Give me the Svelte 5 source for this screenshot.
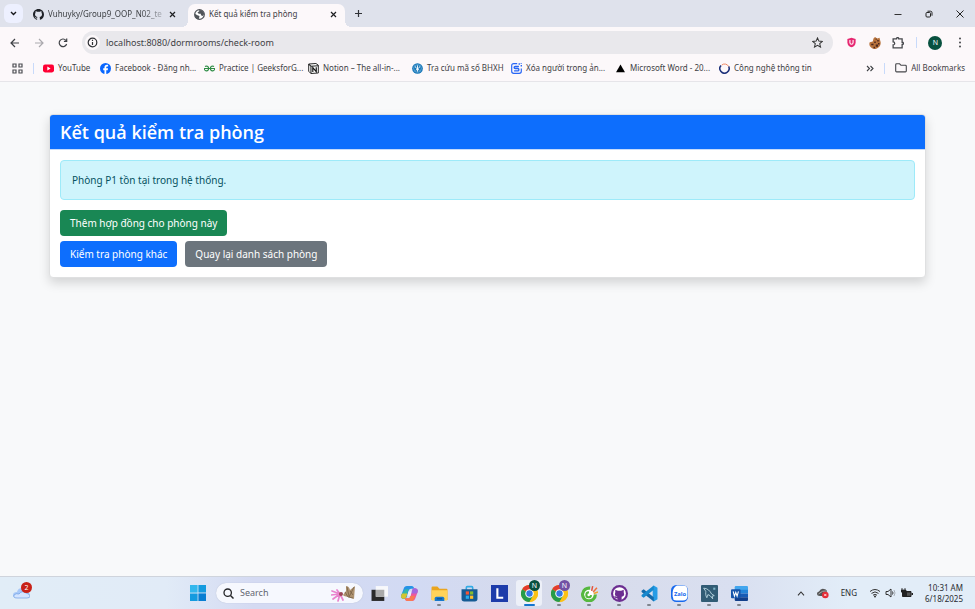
<script>
  const bookmarks = [
    { icon: 'youtube', label: 'YouTube', size: 'small' },
    { icon: 'facebook', label: 'Facebook - Đăng nh...', size: '' },
    { icon: 'geeks', label: 'Practice | GeeksforG...', size: '' },
    { icon: 'notion', label: 'Notion – The all-in-...', size: '' },
    { icon: 'bhxh', label: 'Tra cứu mã số BHXH', size: 'medium' },
    { icon: 'eraser', label: 'Xóa người trong ản...', size: '' },
    { icon: 'vercel', label: 'Microsoft Word - 20...', size: '' },
    { icon: 'ring', label: 'Công nghệ thông tin', size: '' }
  ];

  const apps = [
    { icon: 'taskview', label: 'Task view' },
    { icon: 'copilot', label: 'Copilot' },
    { icon: 'folder', label: 'File Explorer', open: true },
    { icon: 'store', label: 'Microsoft Store' },
    { icon: 'letter', label: 'L' },
    { icon: 'chrome', label: 'Chrome', active: true, badge: 'green' },
    { icon: 'chrome', label: 'Chrome, second profile', open: true, badge: 'purple' },
    { icon: 'coccoc', label: 'Cốc Cốc', open: true },
    { icon: 'github', label: 'GitHub Desktop', open: true },
    { icon: 'vscode', label: 'Visual Studio Code', open: true },
    { icon: 'zalo', label: 'Zalo', open: true },
    { icon: 'mysql', label: 'MySQL Workbench', open: true },
    { icon: 'word', label: 'Word', open: true }
  ];

  let address = $state('localhost:8080/dormrooms/check-room');
</script>

{#snippet octocat(color)}
  <path fill={color} d="M8 0C3.58 0 0 3.58 0 8c0 3.54 2.29 6.53 5.47 7.59.4.07.55-.17.55-.38 0-.19-.01-.82-.01-1.49-2.01.37-2.53-.49-2.69-.94-.09-.23-.48-.94-.82-1.13-.28-.15-.68-.52-.01-.53.63-.01 1.08.58 1.23.82.72 1.21 1.87.87 2.33.66.07-.52.28-.87.51-1.07-1.78-.2-3.64-.89-3.64-3.95 0-.87.31-1.59.82-2.15-.08-.2-.36-1.02.08-2.12 0 0 .67-.21 2.2.82a7.6 7.6 0 0 1 4 0c1.53-1.04 2.2-.82 2.2-.82.44 1.1.16 1.92.08 2.12.51.56.82 1.27.82 2.15 0 3.07-1.87 3.75-3.65 3.95.29.25.54.73.54 1.48 0 1.07-.01 1.93-.01 2.2 0 .21.15.46.55.38A8 8 0 0 0 16 8c0-4.42-3.58-8-8-8z" />
{/snippet}

{#snippet cross()}
  <svg width="7" height="7" viewBox="0 0 7 7"><path d="M1 1l5 5M6 1L1 6" stroke="#1f2023" stroke-width="1.2" fill="none" /></svg>
{/snippet}

{#snippet bookmarkIcon(name)}
  <svg width="11" height="11" viewBox="0 0 16 16" aria-hidden="true">
    {#if name === 'youtube'}
      <rect x="0" y="2.3" width="16" height="11.4" rx="3" fill="#f03" />
      <path d="M6.3 5.2v5.6L11 8z" fill="#fff" />
    {:else if name === 'facebook'}
      <circle cx="8" cy="8" r="8" fill="#0866ff" />
      <path d="M6.5 16V10.400H4.700V7.700h1.800V6.500c0-2.700 1.200-3.900 3.700-3.900.5 0 1.200.1 1.600.2V5.200c-.2 0-.6-.1-1-.1-1.300 0-1.700.5-1.700 1.700v.9h2.600l-.5 2.700H9.100V16z" fill="#fff" />
    {:else if name === 'geeks'}
      <g fill="none" stroke="#2f8d46" stroke-width="1.700">
        <path d="M1.500 5.200C3.500 3.600 6.800 4.900 6.800 8S3.500 12.400 1.300 10.300C.5 9.500.4 8.600.4 8h15.200c0 .6-.1 1.500-.9 2.300-2.200 2.100-5.500.8-5.500-2.300s3.300-4.400 5.300-2.800" />
      </g>
    {:else if name === 'notion'}
      <path d="M1 1.500L11.500.7 15 3.200v11.300l-10.700.8L1 12z" fill="#fff" stroke="#222" stroke-width="1.400" />
      <path d="M1 1.500l3.300 3.100L15 3.900M4.300 4.600v10.600" fill="none" stroke="#222" stroke-width="1.500" />
      <path d="M7 13V6.700l5 6V6" fill="none" stroke="#111" stroke-width="1.700" />
    {:else if name === 'bhxh'}
      <circle cx="8" cy="8" r="7.800" fill="#1675b6" />
      <circle cx="8" cy="8" r="5.600" fill="none" stroke="#8fc8ea" stroke-width=".8" />
      <path d="M8 3.500v9M5 5c0 4 6 4 6 0M5.500 10.500L8 8.500l2.500 2" stroke="#fff" stroke-width="1.300" fill="none" />
    {:else if name === 'eraser'}
      <path d="M9 1H4C2 1 1 2 1 4v8c0 2 1 3 3 3h8c2 0 3-1 3-3V8" fill="none" stroke="#2866f5" stroke-width="1.700" />
      <path d="M11.500 5H6.200C4 5 4 8 6.200 8h3.600c2.200 0 2.200 3.500 0 3.500H4.500" fill="none" stroke="#2866f5" stroke-width="2" />
      <path d="M11 .5h2v2h-2zM14 3h2v2h-2zM14 0h1.500v1.500H14z" fill="#2866f5" />
    {:else if name === 'vercel'}
      <path d="M8 2l6.500 11.500h-13z" fill="#000" />
    {:else}
      <path d="M3 3.500A6.700 6.700 0 1 0 14 5" fill="none" stroke="#1b2f79" stroke-width="2.200" />
      <path d="M4 3A6.500 6.500 0 0 1 14 5" fill="none" stroke="#ee7950" stroke-width="1.300" />
    {/if}
  </svg>
{/snippet}

{#snippet appIcon(name)}
  <svg width="17" height="17" viewBox="0 0 32 32" aria-hidden="true">
    {#if name === 'taskview'}
      <rect x="1" y="9" width="24" height="21" fill="#292929" />
      <rect x="9" y="2" width="23" height="20" fill="#f7f8fb" />
      <rect x="9" y="9" width="16" height="13" fill="#aaa" />
    {:else if name === 'copilot'}
      <path d="M11 2h9c3 0 4 2 5 5h-6c-3 0-4 2-5 5l-3 10c-1 3-3 4-5 4-4 0-7-3-5-8l4-11c1-3 3-5 6-5z" fill="#2693e6" />
      <path d="M8 8h7c-2 1-2 4-3 7l-2 7c-1 3-3 4-5 4-4 0-6-3-4-8z" fill="#35b8a6" />
      <path d="M2 16h10l-2 6c-1 3-3 4-5 4-4 0-6-3-4-8z" fill="#d6c32f" />
      <path d="M21 30h-9c-3 0-4-2-5-5h6c3 0 4-2 5-5l3-10c1-3 3-4 5-4 4 0 7 3 5 8l-4 11c-1 3-3 5-6 5z" fill="#ed579f" />
      <path d="M21 30h-9c-3 0-4-2-5-5h6c3 0 4-2 5-5h9l-2 5c-1 3-2 5-4 5z" fill="#fa7952" />
      <path d="M21 10c1-3 3-4 5-4 4 0 7 3 5 8l-1 2H19z" fill="#a267df" />
      <path d="M14 12h6l-2 8h-6z" fill="#e7effc" />
    {:else if name === 'folder'}
      <path d="M1 5q0-2 2-2h9l4 4h13q2 0 2 2v19H1z" fill="#eaa51f" />
      <path d="M1 10h30v17q0 2-2 2H3q-2 0-2-2z" fill="#ffd35a" />
      <path d="M7 30v-5q0-3 3-3h12q3 0 3 3v5z" fill="#1679ce" />
      <path d="M11 26h10" stroke="#0b4d90" stroke-width="2" />
    {:else if name === 'store'}
      <path d="M10 9V5q0-2 2-2h8q2 0 2 2v4" fill="none" stroke="#32abe5" stroke-width="3" />
      <path d="M1 8h30v18q0 5-5 5H6q-5 0-5-5z" fill="#155b94" />
      <path d="M9 12h6v6H9z" fill="#f45435" /><path d="M17 12h6v6h-6z" fill="#86bc2c" />
      <path d="M9 20h6v6H9z" fill="#24adef" /><path d="M17 20h6v6h-6z" fill="#ffc027" />
    {:else if name === 'letter'}
      <rect width="32" height="32" fill="#1d3caa" />
      <path d="M12 6v18h11" fill="none" stroke="#fff" stroke-width="4" />
    {:else if name === 'chrome'}
      <circle cx="16" cy="16" r="16" fill="#fbc116" />
      <path d="M16 16L2.100 8A16 16 0 0 1 29.900 8z" fill="#e33b2e" />
      <path d="M2.100 8A16 16 0 0 0 16 32l7-12-7-4z" fill="#269b4b" />
      <path d="M16 8h13.900A16 16 0 0 1 16 32l7-12z" fill="#fbc116" />
      <circle cx="16" cy="16" r="8" fill="#fff" /><circle cx="16" cy="16" r="6" fill="#3478e5" />
    {:else if name === 'coccoc'}
      <path d="M17 6.500A11.500 11.500 0 1 0 26.500 18" fill="none" stroke="#55b83f" stroke-width="7" />
      <circle cx="15" cy="18" r="9" fill="#fff" />
      <path d="M15 14a4.500 4.500 0 1 0 4 5" fill="none" stroke="#55b83f" stroke-width="4" />
      <path d="M20 11l2-9" stroke="#e5533d" stroke-width="2.800" />
      <path d="M23 13l7-8" stroke="#ef6d37" stroke-width="2.800" /><path d="M24 16l8-3" stroke="#f4a12b" stroke-width="2.800" />
    {:else if name === 'github'}
      <circle cx="16" cy="16" r="16" fill="#6c2e91" />
      <circle cx="16" cy="16" r="12" fill="#fff" />
      <path d="M12 28v-3c-5 1-4-3-6-4 3-1 4 3 6 1-4-1-6-4-4-8l0-5 5 2h6l5-2v5c2 5 0 7-4 8v6z" fill="#6c2e91" />
    {:else if name === 'vscode'}
      <path d="M24 1l7 4v22l-7 4-2-2V3z" fill="#279ce5" />
      <path d="M1 11l4-3 19 15v8L1 13z" fill="#146aaa" />
      <path d="M1 21l4 3L24 9V1L1 19z" fill="#1688ce" />
    {:else if name === 'zalo'}
      <rect width="32" height="32" rx="10" fill="#1769ee" />
      <path d="M11 1h12q8 0 8 9v11q0 8-9 8H10l-5-1c-3-8-4-22 6-27z" fill="#fff" />
      <text x="17" y="20" text-anchor="middle" font-family="Open Sans, sans-serif" font-size="11" font-weight="700" fill="#1769ee">Zalo</text>
    {:else if name === 'mysql'}
      <rect width="32" height="32" rx="2" fill="#315c75" />
      <path d="M5 6c7 0 12 5 15 11l5 3-4 1 1 5-5-6-4-2-2 6c-3-5-2-9-2-12z" fill="none" stroke="#bfdce5" stroke-width="1.600" />
      <path d="M23 5h4v4h-4z" fill="#7fb5c8" />
    {:else}
      <path d="M9 2h21q2 0 2 2v6H7V4q0-2 2-2z" fill="#42a6ee" />
      <path d="M7 9h25v7H7z" fill="#2484d8" /><path d="M7 16h25v7H7z" fill="#175bb5" />
      <path d="M7 23h25v5q0 2-2 2H9q-2 0-2-2z" fill="#123f8b" />
      <rect y="8" width="18" height="17" rx="2" fill="#1655ab" />
      <path d="M4 12l2.500 9L9 14l2.500 7L14 12" fill="none" stroke="#fff" stroke-width="2" />
    {/if}
  </svg>
{/snippet}

<div class="screen">
  <header>
    <div class="tabs">
      <button class="tab-search" aria-label="Search tabs"><svg width="7" height="5" viewBox="0 0 7 5"><path d="M1 1l2.500 2.500L6 1" fill="none" stroke="#18191d" stroke-width="1.400" /></svg></button>
      <div class="tab">
        <svg width="11" height="11" viewBox="0 0 16 16">{@render octocat('#1d2026')}</svg>
        <span class="tab-title faded">Vuhuyky/Group9_OOP_N02_te</span>
        <button aria-label="Close tab">{@render cross()}</button>
      </div>
      <div class="tab active">
        <svg width="11" height="11" viewBox="0 0 16 16"><circle cx="8" cy="8" r="7" fill="#fff" stroke="#505459" stroke-width="1.800" /><path d="M1 7l4 2 3 1-1 5C3 15 1 12 1 8zM7 1l5 1 3 5-2 3-3-1V7H7L5 5l3-2z" fill="#505459" /></svg>
        <span class="tab-title">Kết quả kiểm tra phòng</span>
        <button aria-label="Close tab">{@render cross()}</button>
      </div>
      <button class="new-tab" aria-label="New tab"><svg width="9" height="9" viewBox="0 0 9 9"><path d="M4.500 1v7M1 4.500h7" stroke="#303237" stroke-width="1.200" /></svg></button>
      <div class="window-controls">
        <button aria-label="Minimize"><svg width="8" height="8" viewBox="0 0 8 8"><path d="M.5 4.500h7" stroke="#333" /></svg></button>
        <button aria-label="Restore"><svg width="8" height="8" viewBox="0 0 8 8"><path d="M2.500 1.200h3q1.500 0 1.500 1.500v3M1 3.500q0-1 1-1h2.500q1 0 1 1V6q0 1-1 1H2Q1 7 1 6z" fill="none" stroke="#222" /></svg></button>
        <button aria-label="Close"><svg width="8" height="8" viewBox="0 0 8 8"><path d="M.5.500l7 7m0-7l-7 7" stroke="#222" /></svg></button>
      </div>
    </div>

    <div class="toolbar">
      <button aria-label="Back"><svg width="10" height="10" viewBox="0 0 10 10"><path d="M9 5H1.500M5 1L1 5l4 4" fill="none" stroke="#3e4145" stroke-width="1.200" /></svg></button>
      <button aria-label="Forward"><svg width="10" height="10" viewBox="0 0 10 10"><path d="M1 5h7.500M5 1l4 4-4 4" fill="none" stroke="#aaa9ad" stroke-width="1.200" /></svg></button>
      <button aria-label="Reload"><svg width="10" height="10" viewBox="0 0 10 10"><path d="M8.600 6A3.800 3.800 0 1 1 8 2.500M8.700.600v2.800H5.900" fill="none" stroke="#3e4145" stroke-width="1.200" /></svg></button>
      <div class="address">
        <button class="info" aria-label="Site information"><svg width="11" height="11" viewBox="0 0 11 11"><circle cx="5.500" cy="5.500" r="4.300" fill="none" stroke="#303236" stroke-width="1.200" /><path d="M5.500 5v3M5.500 2.800v1.200" stroke="#303236" stroke-width="1.200" /></svg></button>
        <input aria-label="Address" bind:value={address} />
        <button class="star" aria-label="Bookmark this page"><svg width="11" height="11" viewBox="0 0 24 24"><path d="M12 2l3 7 7.500.600-5.700 5 1.800 7.400L12 18l-6.600 4 1.800-7.400-5.700-5L9 9z" fill="none" stroke="#333" stroke-width="2.200" /></svg></button>
      </div>
      <div class="extensions">
        <button aria-label="Shield"><svg width="11" height="11" viewBox="0 0 16 16"><path d="M8 1l6 2v5c0 4-3 6-6 7-3-1-6-3-6-7V3z" fill="#e62871" /><path d="M5.700 4.500v3.500c0 3.500 4.600 3.500 4.600 0V4.500" fill="none" stroke="#fff" stroke-width="1.600" /></svg></button>
        <button aria-label="Cookies"><svg width="12" height="12" viewBox="0 0 16 16"><path d="M8 0l3 2 3-1 1 4c2 5-1 10-6 11C3 16-1 11 1 7l4-1 1-4z" fill="#b8733c" /><path d="M7 6h2v2H7zM11 4h2v2h-2zM3 9h3v2H3zM9 10h3v3H9zM6 13h2v2H6zM12 8h2v2h-2zM9 2h1v2H9z" fill="#4a271e" /></svg></button>
        <button aria-label="Extensions"><svg width="12" height="12" viewBox="0 0 16 16"><path d="M1.500 2.500h4.500c0-2.300 3-2.300 3 0h4.500v4.500c2.300 0 2.300 3 0 3v4.500h-12v-4c2.800 0 2.800-4 0-4z" fill="none" stroke="#45474b" stroke-width="1.700" /></svg></button>
        <i class="divider"></i>
        <button class="avatar">N</button>
        <button aria-label="Browser menu"><svg width="4" height="11" viewBox="0 0 4 11"><g fill="#45474b"><circle cx="2" cy="1.500" r="1" /><circle cx="2" cy="5.500" r="1" /><circle cx="2" cy="9.500" r="1" /></g></svg></button>
      </div>
    </div>

    <nav class="bookmarks" aria-label="Bookmarks">
      <button aria-label="Apps"><svg width="11" height="11" viewBox="0 0 11 11"><path d="M1 1h3v3H1zM7 1h3v3H7zM1 7h3v3H1zM7 7h3v3H7z" fill="none" stroke="#4c4e53" stroke-width="1.200" /></svg></button>
      <i class="divider"></i>
      <div class="links">
        {#each bookmarks as item}
          <a href="#{item.icon}" class={item.size}>{@render bookmarkIcon(item.icon)}<span>{item.label}</span></a>
        {/each}
      </div>
      <button class="overflow" aria-label="More bookmarks"><svg width="8" height="7" viewBox="0 0 8 7"><path d="M1 1l2.500 2.500L1 6M4.500 1L7 3.500 4.500 6" fill="none" stroke="#3e4145" stroke-width="1.100" /></svg></button>
      <i class="divider"></i>
      <a class="all" href="#all"><svg width="12" height="10" viewBox="0 0 12 10"><path d="M.700 8V1.700q0-.9.9-.9h3L6 2.300h4.400q.9 0 .9.900V8q0 .9-.9.900H1.600Q.700 8.900.700 8z" fill="none" stroke="#45474b" stroke-width="1.100" /></svg><span>All Bookmarks</span></a>
    </nav>
  </header>

  <main>
    <section class="card">
      <h1>Kết quả kiểm tra phòng</h1>
      <div class="card-body">
        <div class="alert" role="status">Phòng P1 tồn tại trong hệ thống.</div>
        <div class="actions"><button class="btn success">Thêm hợp đồng cho phòng này</button></div>
        <div class="actions">
          <button class="btn primary">Kiểm tra phòng khác</button>
          <button class="btn secondary">Quay lại danh sách phòng</button>
        </div>
      </div>
    </section>
  </main>

  <footer>
    <div class="weather">
      <button aria-label="Weather, 2 notifications">
        <svg width="17" height="12" viewBox="0 0 17 12"><path d="M4 11Q0 11 0 8t4-3Q5 1 9 1t5 4q3 1 3 3t-3 3z" fill="#a8c8f7" /><path d="M4 11Q0 11 1 8q2-2 5-1 3-4 7-1 4 1 4 3 0 2-3 2z" fill="#d3e4ff" stroke="#5e92dd" stroke-width=".6" /></svg>
        <span class="count">2</span>
      </button>
    </div>
    <button class="start" aria-label="Start"><svg width="16" height="16" viewBox="0 0 16 16"><path d="M0 0h7.600v7.600H0z" fill="#32b7ed" /><path d="M8.400 0H16v7.600H8.400zM0 8.400h7.600V16H0z" fill="#149bdf" /><path d="M8.400 8.400H16V16H8.400z" fill="#087ed2" /></svg></button>
    <label class="search">
      <svg width="11" height="11" viewBox="0 0 11 11"><circle cx="4.700" cy="4.700" r="3.700" fill="none" stroke="#252629" stroke-width="1.300" /><path d="M7.500 7.500L10.500 10.500" stroke="#252629" stroke-width="1.500" /></svg>
      <input placeholder="Search" aria-label="Search" />
      <svg width="25" height="18" viewBox="0 0 25 18"><path d="M9 10L1 7M9 10L0 11M9 10L2 15M9 10l-2 7M9 10l3 6M9 10L6 6" stroke="#e983cd" stroke-width="1.700" stroke-linecap="round" /><circle cx="10" cy="10" r="2" fill="#9c4656" /><path d="M12 11l3-4 0-5q3 0 4 4l5-4-1 13-6-2-4-1z" fill="#ae9270" /><path d="M16 3l2 9M18 13l5-10M14 8l3 5 5 1M19 7l3 4" stroke="#6f573d" stroke-width=".7" fill="none" /></svg>
    </label>
    <div class="apps">
      {#each apps as app}
        <button class:current={app.active} class:open={app.open} aria-label={app.label}>
          {@render appIcon(app.icon)}
          {#if app.badge}<span class="profile {app.badge}">N</span>{/if}
        </button>
      {/each}
    </div>
    <div class="tray">
      <button aria-label="Show hidden icons"><svg width="8" height="5" viewBox="0 0 8 5"><path d="M1 4.300L4 1l3 3.300" fill="none" stroke="#333" stroke-width="1.100" /></svg></button>
      <button aria-label="Cloud sync error"><svg width="12" height="11" viewBox="0 0 12 11"><path d="M3 8Q0 8 0 5.500 0 4 2 3.500 4 0 7 1q2 0 3 2l-3 5z" fill="#555" /><path d="M1.500 6Q6 2 9 3" stroke="#aaa" fill="none" /><circle cx="8.300" cy="7" r="3.300" fill="#e32c36" /><path d="M7.200 5.900l2.200 2.200m0-2.200L7.200 8.100" stroke="#fff" stroke-width=".8" /></svg></button>
      <button class="lang">ENG</button>
      <button class="status" aria-label="Network, volume and battery">
        <svg width="12" height="10" viewBox="0 0 12 10"><path d="M1 3.500q5-4 10 0M2.500 5.400q3.500-3 7 0M4 7.200q2-1.600 4 0" fill="none" stroke="#333" stroke-width="1" /><circle cx="6" cy="8.500" r="1" fill="#333" /></svg>
        <svg width="12" height="10" viewBox="0 0 12 10"><path d="M1 3.500h2L6 1v8L3 6.500H1z" fill="none" stroke="#333" /><path d="M7.500 3.500q1 1.500 0 3" fill="none" stroke="#333" /><path d="M9 2q2 3 0 6" fill="none" stroke="#aab0b8" /></svg>
        <svg width="12" height="10" viewBox="0 0 12 10"><path d="M1.500 3.500h8.500v5H1.500z" fill="#222" stroke="#222" /><path d="M10.500 5H12v2h-1.500z" fill="#222" /><path d="M1 0v2M4 0v2M0 2h5v2H3v2H2V4H0z" fill="#222" stroke="#222" stroke-width=".8" /><path d="M6 7.800V4.500h3.500v3.300z" fill="#555" /></svg>
      </button>
      <button class="clock"><span>10:31 AM</span><span>6/18/2025</span></button>
    </div>
  </footer>
</div>

<style>
  :global(body) { margin: 0; }
  .screen, .screen * { box-sizing: border-box; }
  .screen {
    min-height: 100vh;
    display: flex;
    flex-direction: column;
    background: #f8f9fa;
    color: #3e4145;
    font: 8px/12px "Noto Sans", "Open Sans", sans-serif;
  }
  button, input { font: inherit; color: inherit; border: 0; margin: 0; padding: 0; background: none; }
  button { display: flex; align-items: center; justify-content: center; white-space: nowrap; }
  input { outline: 0; min-width: 0; }
  a { color: inherit; text-decoration: none; }
  svg { display: block; flex: none; }
  .divider { width: 1px; height: 11px; background: #c8dafa; flex: none; }

  header { background: #fcf8fa; border-bottom: 1px solid #e6e5e9; }
  .tabs { display: flex; align-items: flex-end; height: 27px; padding-left: 4px; background: #dfe2ec; }
  .tab-search { width: 19px; height: 19px; margin-bottom: 4px; border-radius: 6px; background: #edf0ff; }
  .tab { display: flex; align-items: center; gap: 4px; width: 157px; height: 23px; margin-left: 4px; padding: 0 8px 3px 6px; }
  .tab.active { position: relative; background: #fcf8fa; border-radius: 7px 7px 0 0; }
  .tab.active::before, .tab.active::after { content: ""; position: absolute; bottom: 0; width: 6px; height: 6px; }
  .tab.active::before { right: 100%; background: radial-gradient(circle at 0 0, transparent 6px, #fcf8fa 6px); }
  .tab.active::after { left: 100%; background: radial-gradient(circle at 100% 0, transparent 6px, #fcf8fa 6px); }
  .tab-title { flex: 1; white-space: nowrap; }
  .faded { mask-image: linear-gradient(90deg, #000 80%, rgb(0 0 0 / 20%)); }
  .tab button { width: 7px; height: 12px; }
  .new-tab { width: 17px; height: 17px; margin: 0 0 5px 5px; }
  .window-controls { display: flex; align-self: center; margin-left: auto; }
  .window-controls button { width: 31px; height: 27px; }

  .toolbar { display: flex; align-items: center; height: 31px; padding: 0 9px 0 3px; }
  .toolbar > button { width: 24px; height: 24px; }
  .address { flex: 1; display: flex; align-items: center; height: 23px; margin-left: 7px; padding: 0 10px 0 3px; border-radius: 12px; background: #e9e8ec; }
  .address input { flex: 1; margin-left: 6px; font-size: 9px; line-height: 16px; }
  .info { width: 15px; height: 15px; border-radius: 50%; background: #fcf8fa; }
  .extensions { display: flex; align-items: center; justify-content: space-between; width: 121px; margin-left: 12px; }
  .extensions button { min-width: 12px; height: 16px; }
  .extensions .avatar { width: 14px; height: 14px; border-radius: 50%; background: #08513f; color: #fff; font-size: 7px; }

  .bookmarks { display: flex; align-items: center; height: 23px; padding: 0 10px 3px 12px; }
  .bookmarks > button + .divider { margin-left: 10px; }
  .links { display: flex; flex: 1; gap: 11px; margin-left: 9px; }
  .links a { display: flex; align-items: center; gap: 4px; width: 93px; white-space: nowrap; }
  .links .small { width: 46px; }
  .links .medium { width: 88px; }
  .overflow { width: 9px; }
  .all { display: flex; align-items: center; gap: 4px; margin-left: 10px; white-space: nowrap; }

  main { flex: 1; padding: 32px 49px; font-size: 10px; line-height: 16px; }
  .card { background: #fff; border: 1px solid #dfe0e1; border-radius: 4px; box-shadow: 0 5px 11px rgb(0 0 0 / 15%); overflow: hidden; }
  h1 { margin: 0; padding: 5px 10px; background: #0d6efd; border-bottom: 1px solid #c6dbfb; color: #fff; font-family: "Open Sans", "Noto Sans", sans-serif; font-size: 18px; line-height: 24px; font-weight: 600; }
  .card-body { padding: 10px; }
  .alert { padding: 11px; margin-bottom: 10px; border: 1px solid #9eeaf9; border-radius: 4px; background: #cff4fc; color: #055160; }
  .actions { display: flex; gap: 8px; }
  .actions + .actions { margin-top: 5px; }
  .btn { height: 26px; padding: 0 10px; border-radius: 4px; color: #fff; }
  .success { background: #198754; }
  .primary { background: #0d6efd; }
  .secondary { background: #6c757d; }

  footer { display: flex; align-items: center; height: 33px; border-top: 1px solid #cfd4dc; background: linear-gradient(90deg, #e1edf7 0, #e1ebf7 17%, #d4daf2 26%, #d2daf3 43%, #d7dbea 57%, #d9dff0 75%, #e2edf8 87%); color: #292b30; }
  .weather { width: 184px; padding-left: 13px; }
  .weather button { position: relative; }
  .count { position: absolute; left: 8px; top: -5px; width: 11px; height: 11px; border-radius: 50%; background: #c82117; color: #fff; font-size: 7px; line-height: 11px; }
  .start { width: 28px; height: 28px; }
  .search { display: flex; align-items: center; width: 147px; height: 20px; margin-left: 4px; padding: 0 7px; border-radius: 10px; background: #f6f8fe; box-shadow: 0 0 1px #a7b1c8; }
  .search input { flex: 1; margin-left: 6px; font-size: 9px; }
  .search input::placeholder { color: #626570; opacity: 1; }
  .apps { display: flex; gap: 4px; margin-left: 3px; }
  .apps button { position: relative; width: 26px; height: 26px; border-radius: 3px; }
  .apps .current { background: #edf0f8; }
  .apps .open::after, .apps .current::after { content: ""; position: absolute; bottom: 0; width: 4px; height: 2px; border-radius: 1px; background: #80858e; }
  .apps .current::after { width: 11px; background: #1475cf; }
  .profile { position: absolute; top: 0; right: 2px; width: 11px; height: 11px; border-radius: 50%; color: #fff; font-size: 7px; line-height: 11px; }
  .green { background: #08513f; }
  .purple { background: #7151a4; }
  .tray { display: flex; align-items: center; gap: 12px; margin-left: auto; padding-right: 12px; }
  .status { gap: 4px; }
  .clock { flex-direction: column; align-items: flex-end; line-height: 11px; }
</style>
